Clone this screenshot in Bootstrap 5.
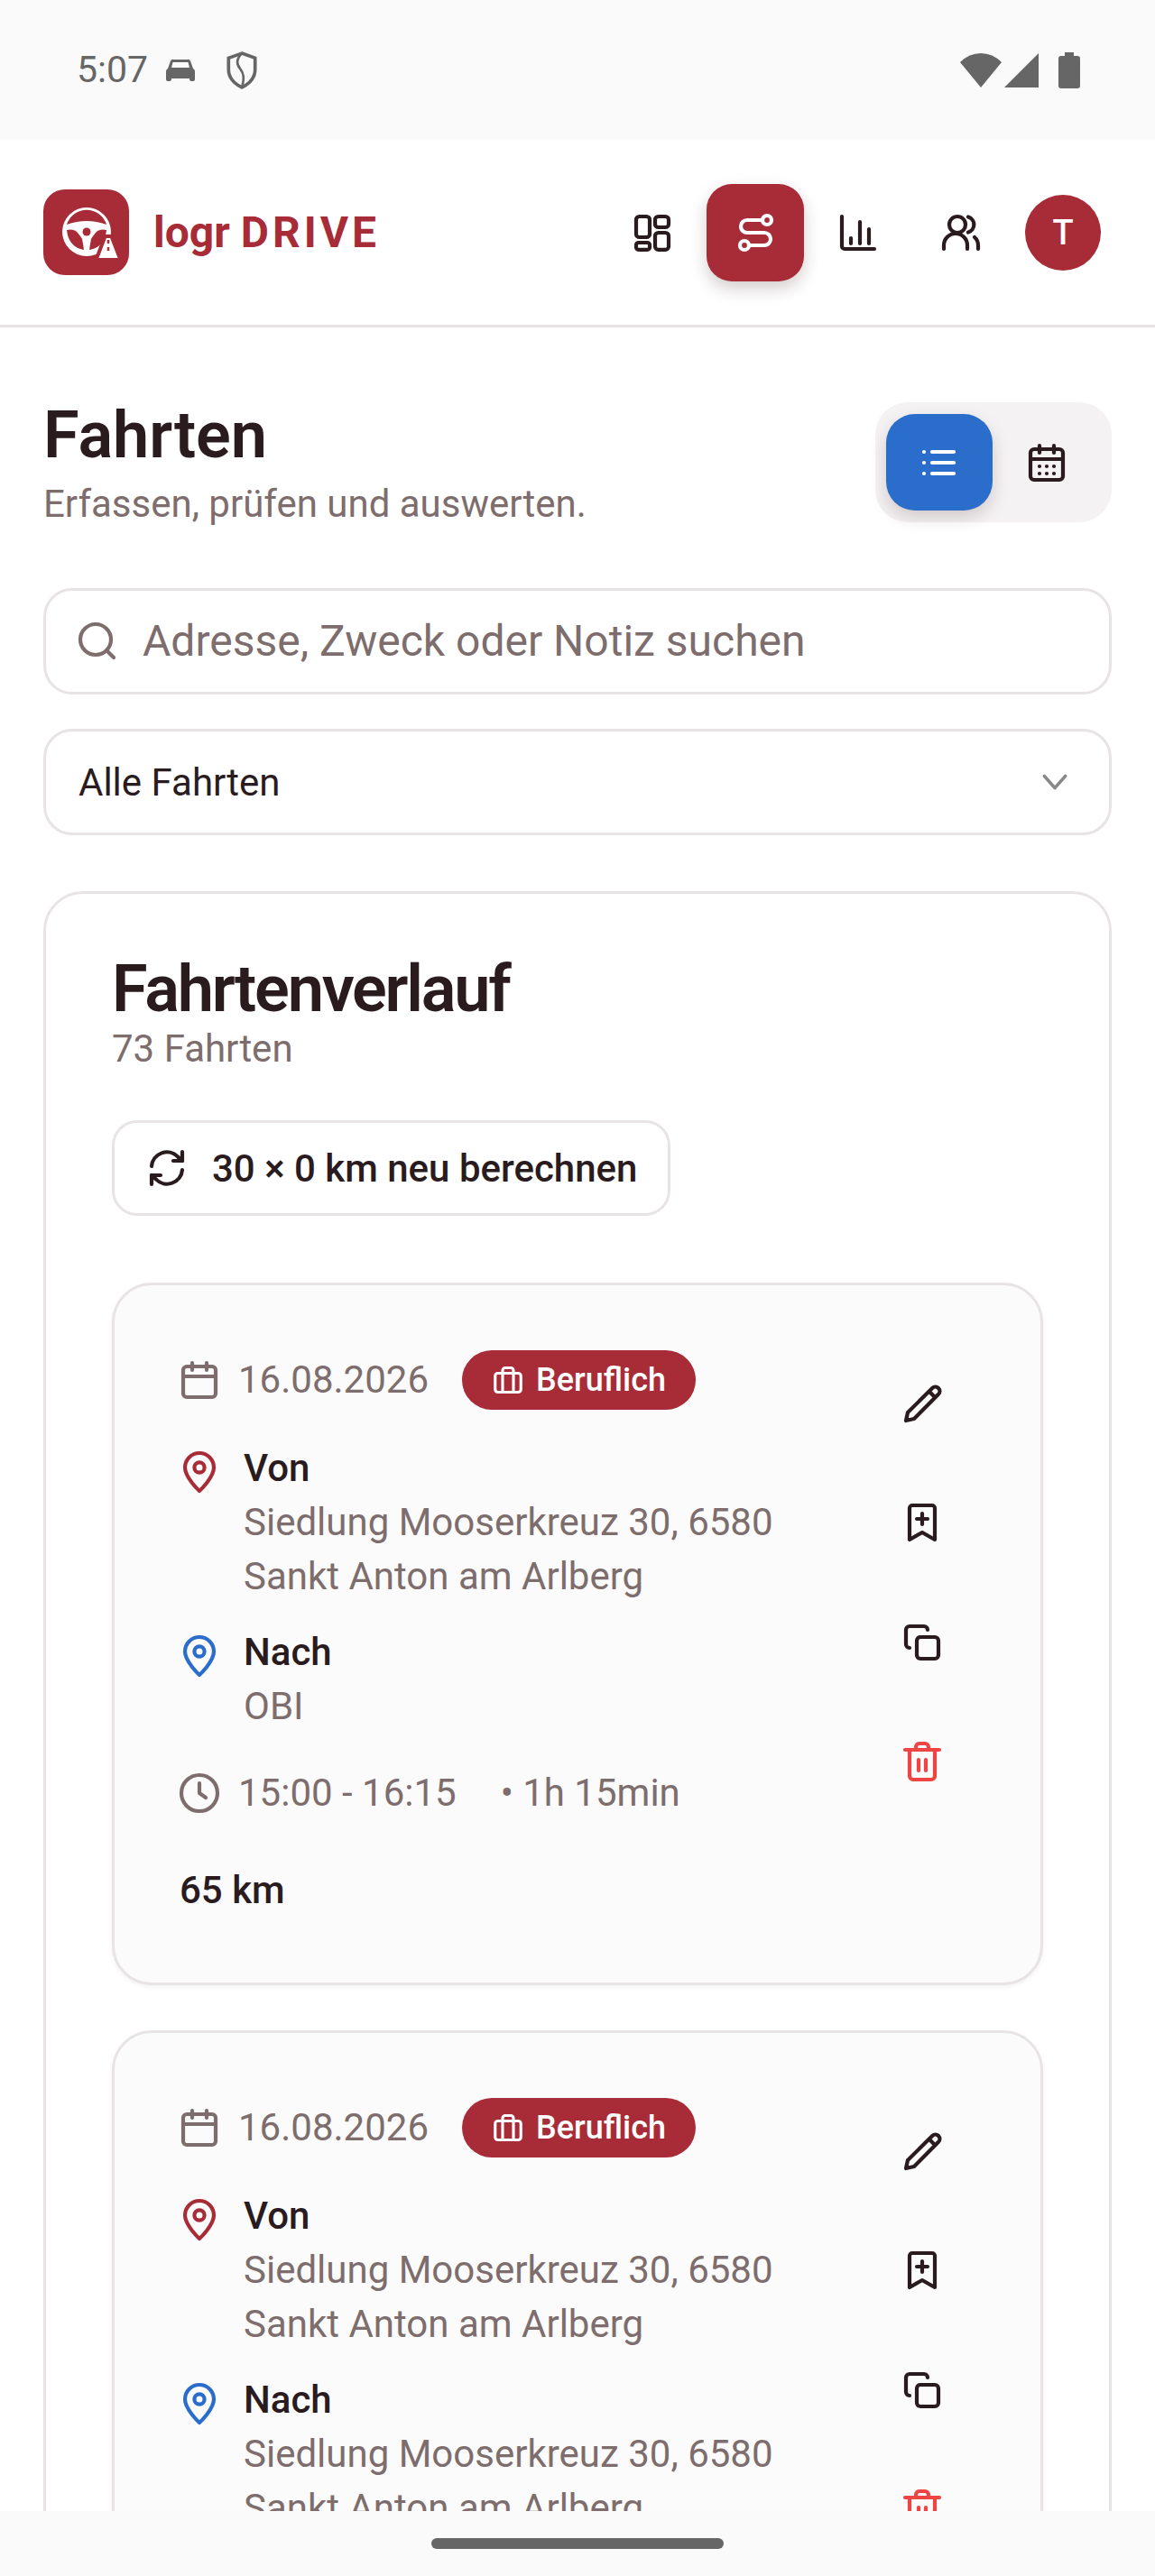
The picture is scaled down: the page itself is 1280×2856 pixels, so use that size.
<!DOCTYPE html>
<html lang="de">
<head>
  <meta charset="UTF-8">
  <title>logr DRIVE - Fahrten</title>
  <link href="https://cdn.jsdelivr.net/npm/bootstrap@5.3.3/dist/css/bootstrap.min.css" rel="stylesheet">
  <style>
    :root {
      --brand: #a82c37;
      --ink: #2a1c1e;
      --muted: #7d6d6d;
      --line: #e8e4e6;
      --blue: #2b6dcb;
    }
    html, body { height: 2856px; }
    body {
      margin: 0;
      overflow: hidden;
      background: #fff;
      color: var(--ink);
      font-family: Roboto, "Liberation Sans", sans-serif;
      font-size: 42px;
      line-height: 60px;
    }
    svg.ico {
      width: 48px;
      height: 48px;
      margin: -2px;
      flex: none;
      fill: none;
      stroke: currentColor;
      stroke-width: 2.1;
      stroke-linecap: round;
      stroke-linejoin: round;
    }

    .status-bar { height: 155px; background: #fafafa; color: #666; padding: 0 83px 0 85px; }
    .status-time { font-size: 41px; line-height: 44px; margin-right: 20px; margin-top: -2px; }
    .shield-mark { margin-left: 34px; }
    .signal-mark { margin-left: 3px; }
    .battery-mark { margin-left: 22px; }
    .app-screen { height: 2629px; overflow: hidden; }
    .bottom-bar { height: 72px; background: #fafafa; }
    .home-pill { width: 324px; height: 12px; border-radius: 6px; background: #666; }

    .top-bar { height: 208px; border-bottom: 3px solid var(--line); padding: 0 60px 0 48px; }
    .logo-tile { width: 95px; height: 95px; border-radius: 24px; background: var(--brand); }
    .logo-text { font-weight: 700; font-size: 48px; line-height: 1; color: var(--brand); margin-left: 27px; }
    .logo-text span { letter-spacing: 4px; }
    .nav-icons { gap: 6px; }
    .nav-btn { width: 108px; height: 108px; border-radius: 28px; color: var(--ink); border: 0; padding: 0; }
    .nav-btn.is-on { background: var(--brand); color: #fff; box-shadow: 0 8px 18px rgba(60, 30, 30, .22); }
    .nav-btn.is-on:hover { background: var(--brand); color: #fff; }
    .avatar-dot { width: 84px; height: 84px; border-radius: 50%; background: var(--brand); color: #fff; font-weight: 500; font-size: 38px; margin-left: 11px; }

    .page-body { padding: 83px 48px 0; }
    .page-title { font-size: 72px; line-height: 74px; font-weight: 600; margin: 0; }
    .page-sub { font-size: 42px; line-height: 60px; color: var(--muted); margin: 9px 0 0; }
    .view-toggle { padding: 13px 13px 13px 12px; border-radius: 36px; background: #f4f2f3; height: 133px; }
    .view-btn { width: 119px; height: 107px; border-radius: 32px; border: 0; padding: 0; color: var(--ink); }
    .view-btn.is-on { width: 118px; background: var(--blue); color: #fff; box-shadow: 0 8px 18px rgba(60, 30, 30, .18); }
    .view-btn.is-on:hover { background: var(--blue); color: #fff; }

    .search-box { height: 118px; margin-top: 63px; border: 3px solid var(--line); border-radius: 32px; padding-left: 35px; color: var(--muted); background: #fff; }
    .search-box input { border: 0; padding: 0 0 0 28px; font-size: 48px; color: var(--ink); background: transparent; box-shadow: none; }
    .search-box input::placeholder { color: var(--muted); opacity: 1; }
    .filter-select {
      height: 118px;
      margin-top: 38px;
      border: 3px solid var(--line);
      border-radius: 32px;
      padding: 0 100px 0 36px;
      font-size: 42px;
      color: var(--ink);
      background-position: right 40px center;
      background-size: 40px 40px;
      background-image: url("data:image/svg+xml,%3csvg xmlns='http://www.w3.org/2000/svg' viewBox='0 0 24 24'%3e%3cpath fill='none' stroke='%23888' stroke-width='2.2' stroke-linecap='round' stroke-linejoin='round' d='M5 8l7 8 7-8'/%3e%3c/svg%3e");
    }

    .history-card { margin-top: 62px; border: 3px solid var(--line); border-radius: 44px; padding: 68px 73px 0; }
    .history-title { font-size: 72px; line-height: 76px; font-weight: 600; letter-spacing: -2.2px; margin: 0; }
    .history-count { color: var(--muted); font-size: 42px; line-height: 50px; margin: 3px 0 0; }
    .recalc-btn { width: fit-content; height: 106px; margin-top: 54px; border: 3px solid var(--line); border-radius: 28px; padding: 0 34px 0 36px; font-size: 42px; font-weight: 500; color: var(--ink); background: #fff; gap: 28px; }

    .trip-card { margin-top: 74px; border: 3px solid var(--line); border-radius: 44px; background: #fbfbfc; padding: 72px 65px 72px 72px; box-shadow: 0 2px 5px rgba(60, 30, 30, .06); }
    .trip-card + .trip-card { margin-top: 50px; }
    .trip-main { min-width: 0; }
    .date-row { height: 66px; }
    .date-ico { color: var(--muted); }
    .date-txt, .gap-dot { color: var(--muted); }
    .date-txt { margin-left: 21px; }
    .kind-badge { height: 66px; margin-left: 37px; padding: 0 33px; gap: 13px; border-radius: 33px; background: var(--brand); color: #fff; font-size: 36px; font-weight: 500; }
    .kind-badge svg.ico { width: 36px; height: 36px; margin: 0; }
    .place-row { gap: 27px; }
    .place-row.from { margin-top: 35px; }
    .place-row.to { margin-top: 24px; }
    .place-label { font-weight: 500; }
    .place-addr { color: var(--muted); }
    .pin-from { color: var(--brand); margin-top: 10px !important; }
    .pin-to { color: var(--blue); margin-top: 10px !important; }
    .time-row { margin-top: 36px; }
    .gap-dot { margin-left: 49px; }
    .km-row { margin-top: 48px; font-weight: 500; }
    .trip-actions { width: 132px; gap: 12px; }
    .act-btn { width: 132px; height: 120px; padding: 0; border: 0; color: var(--ink); }
    .act-btn.is-danger { color: #ef4444; }
  </style>
</head>
<body>
  <svg width="0" height="0" class="d-block position-absolute">
    <defs>
      <symbol id="i-grid" viewBox="0 0 24 24"><rect x="3" y="3" width="7.500" height="11.500" rx="1.800"/><rect x="13.500" y="3" width="7.500" height="6" rx="1.800"/><rect x="3" y="17.500" width="7.500" height="3.900" rx="1.300"/><rect x="13.500" y="12" width="7.500" height="9.400" rx="1.800"/></symbol>
      <symbol id="i-route" viewBox="0 0 24 24"><circle cx="18.500" cy="5" r="2.500"/><circle cx="6" cy="19" r="2.500"/><path d="M16 5H7.500a3.500 3.500 0 0 0 0 7h9.500a3.500 3.500 0 0 1 0 7H8.500"/></symbol>
      <symbol id="i-chart" viewBox="0 0 24 24"><path d="M3 3v16.500a1.500 1.500 0 0 0 1.500 1.500H21"/><path d="M8 15v3M13 6v12M18 10v8"/></symbol>
      <symbol id="i-users" viewBox="0 0 24 24"><circle cx="10" cy="7.500" r="4.500"/><path d="M2.500 21v-2a6.500 6.500 0 0 1 13 0v2"/><path d="M16 3.200a4.500 4.500 0 0 1 0 8.600"/><path d="M19.500 14.500a6 6 0 0 1 2 4.500v2"/></symbol>
      <symbol id="i-list" viewBox="0 0 24 24"><path d="M8 6h12M8 12h12M8 18h12M3.500 6h.01M3.500 12h.01M3.500 18h.01"/></symbol>
      <symbol id="i-month" viewBox="0 0 24 24"><rect x="3" y="4.500" width="18" height="17" rx="2"/><path d="M3 10h18M8 2.500v4M16 2.500v4"/><path d="M8 14h.01M12 14h.01M16 14h.01M8 18h.01M12 18h.01M16 18h.01"/></symbol>
      <symbol id="i-search" viewBox="0 0 24 24"><circle cx="11" cy="11" r="8.500"/><path d="M17.500 17.500L21 21"/></symbol>
      <symbol id="i-sync" viewBox="0 0 24 24"><path d="M3.500 11a8.500 8.500 0 0 1 14.600-5.200L20.500 8"/><path d="M20.500 3v5h-5"/><path d="M20.500 13a8.500 8.500 0 0 1-14.600 5.200L3.500 16"/><path d="M3.500 21v-5h5"/></symbol>
      <symbol id="i-date" viewBox="0 0 24 24"><rect x="3" y="4.500" width="18" height="17" rx="2"/><path d="M3 10h18M8 2.500v4M16 2.500v4"/></symbol>
      <symbol id="i-case" viewBox="0 0 24 24"><rect x="2.500" y="7" width="19" height="14" rx="2"/><path d="M8 21V5a2 2 0 0 1 2-2h4a2 2 0 0 1 2 2v16"/></symbol>
      <symbol id="i-pin" viewBox="0 0 24 24"><path d="M12 22.500s-8-7.400-8-13a8 8 0 0 1 16 0c0 5.600-8 13-8 13z"/><circle cx="12" cy="9.500" r="2.800"/></symbol>
      <symbol id="i-clock" viewBox="0 0 24 24"><circle cx="12" cy="12" r="10"/><path d="M12 6.500V12l3.500 2.500"/></symbol>
      <symbol id="i-pencil" viewBox="0 0 24 24"><path d="M3 21l1-4.500L17.600 3a2.400 2.400 0 0 1 3.400 3.400L7.500 20z"/><path d="M16 5l3 3"/></symbol>
      <symbol id="i-mark" viewBox="0 0 24 24"><path d="M5 3.500A1.500 1.500 0 0 1 6.500 2h11A1.500 1.500 0 0 1 19 3.500V21l-7-4-7 4z"/><path d="M12 6.500v6M9 9.500h6"/></symbol>
      <symbol id="i-copy" viewBox="0 0 24 24"><rect x="9" y="9" width="12" height="12" rx="2"/><path d="M5 15a2 2 0 0 1-2-2V5a2 2 0 0 1 2-2h8a2 2 0 0 1 2 2"/></symbol>
      <symbol id="i-trash" viewBox="0 0 24 24"><path d="M2.500 5.500h19M5 5.500V20a2 2 0 0 0 2 2h10a2 2 0 0 0 2-2V5.500M8.500 5.500V4a2 2 0 0 1 2-2h3a2 2 0 0 1 2 2v1.500M10 11v6M14 11v6"/></symbol>
    </defs>
  </svg>

  <div class="status-bar d-flex align-items-center">
    <span class="status-time">5:07</span>
    <svg width="32" height="26" viewBox="0 0 32 26" fill="#666"><path d="M5 2.500Q5.500 1 7 1h18q1.500 0 2 1.500L30 11q2 1 2 3v9q0 2-2 2h-2q-2 0-2-2v-1H6v1q0 2-2 2H2q-2 0-2-2v-9q0-2 2-3zM7.500 4L6 10h20l-1.500-6z" fill-rule="evenodd"/></svg>
    <svg class="shield-mark" width="36" height="42" viewBox="0 0 34 40" fill="none" stroke="#666" stroke-width="3.500"><path d="M17 2l14 5v12c0 9-6 15-14 19C9 34 3 28 3 19V7z"/><path d="M17 2c-6 6-6 11-2 16s5 10 2 20" stroke-width="2.500"/></svg>
    <div class="ms-auto d-flex align-items-center">
      <svg width="46" height="38" viewBox="0 0 46 38" fill="#666"><path d="M23 38L0 10Q10 0 23 0t23 10z"/></svg>
      <svg class="signal-mark" width="38" height="38" viewBox="0 0 38 38" fill="#666"><path d="M38 0v38H0z"/></svg>
      <svg class="battery-mark" width="24" height="40" viewBox="0 0 24 40" fill="#666"><path d="M7 0h10v4h4q3 0 3 3v30q0 3-3 3H3q-3 0-3-3V7q0-3 3-3h4z"/></svg>
    </div>
  </div>

  <div class="app-screen">
    <nav class="top-bar d-flex align-items-center">
      <div class="logo-tile d-flex align-items-center justify-content-center">
        <svg width="95" height="95" viewBox="0 0 95 95">
          <circle cx="48" cy="47" r="27" fill="#fff"/>
          <path d="M26 39a23 23 0 0 1 44 0q-11-4-22-4t-22 4z" fill="#a82c37"/>
          <path d="M26 45q8-2 12 3t5 7q1 5 2 12q-17-3-19-22z" fill="#a82c37"/>
          <path d="M70 45q-8-2-12 3t-5 7q-1 5-2 12q17-3 19-22z" fill="#a82c37"/>
          <circle cx="48" cy="47" r="4.500" fill="#a82c37"/>
          <path d="M68.500 52h7l10 26h-27z" fill="#fff" stroke="#a82c37" stroke-width="4"/>
          <path d="M72 56v4M72 64v4" stroke="#a82c37" stroke-width="2.500"/>
        </svg>
      </div>
      <div class="logo-text">logr <span>DRIVE</span></div>
      <div class="ms-auto d-flex align-items-center nav-icons">
        <button class="btn nav-btn" type="button"><svg class="ico"><use href="#i-grid"/></svg></button>
        <button class="btn nav-btn is-on" type="button"><svg class="ico"><use href="#i-route"/></svg></button>
        <button class="btn nav-btn" type="button"><svg class="ico"><use href="#i-chart"/></svg></button>
        <button class="btn nav-btn" type="button"><svg class="ico"><use href="#i-users"/></svg></button>
        <div class="avatar-dot d-flex align-items-center justify-content-center">T</div>
      </div>
    </nav>

    <main class="page-body">
      <div class="d-flex justify-content-between align-items-start">
        <div>
          <h1 class="page-title">Fahrten</h1>
          <p class="page-sub">Erfassen, prüfen und auswerten.</p>
        </div>
        <div class="view-toggle d-flex align-items-center">
          <button class="btn view-btn is-on" type="button"><svg class="ico"><use href="#i-list"/></svg></button>
          <button class="btn view-btn" type="button"><svg class="ico"><use href="#i-month"/></svg></button>
        </div>
      </div>

      <div class="search-box d-flex align-items-center">
        <svg class="ico"><use href="#i-search"/></svg>
        <input class="form-control" type="text" placeholder="Adresse, Zweck oder Notiz suchen">
      </div>
      <select class="form-select filter-select">
        <option>Alle Fahrten</option>
      </select>

      <section class="history-card">
        <h2 class="history-title">Fahrtenverlauf</h2>
        <p class="history-count">73 Fahrten</p>
        <button class="btn recalc-btn d-flex align-items-center" type="button">
          <svg class="ico"><use href="#i-sync"/></svg>
          30 × 0 km neu berechnen
        </button>

        <article class="trip-card d-flex justify-content-between">
          <div class="trip-main">
            <div class="date-row d-flex align-items-center">
              <svg class="ico date-ico"><use href="#i-date"/></svg>
              <span class="date-txt">16.08.2026</span>
              <span class="kind-badge d-inline-flex align-items-center"><svg class="ico"><use href="#i-case"/></svg>Beruflich</span>
            </div>
            <div class="place-row from d-flex">
              <svg class="ico pin-from"><use href="#i-pin"/></svg>
              <div>
                <div class="place-label">Von</div>
                <div class="place-addr">Siedlung Mooserkreuz 30, 6580 Sankt Anton am Arlberg</div>
              </div>
            </div>
            <div class="place-row to d-flex">
              <svg class="ico pin-to"><use href="#i-pin"/></svg>
              <div>
                <div class="place-label">Nach</div>
                <div class="place-addr">OBI</div>
              </div>
            </div>
            <div class="time-row d-flex align-items-center">
              <svg class="ico date-ico"><use href="#i-clock"/></svg>
              <span class="date-txt">15:00 - 16:15</span>
              <span class="gap-dot">• 1h 15min</span>
            </div>
            <div class="km-row">65 km</div>
          </div>
          <div class="trip-actions d-flex flex-column flex-shrink-0">
            <button class="btn act-btn" type="button"><svg class="ico"><use href="#i-pencil"/></svg></button>
            <button class="btn act-btn" type="button"><svg class="ico"><use href="#i-mark"/></svg></button>
            <button class="btn act-btn" type="button"><svg class="ico"><use href="#i-copy"/></svg></button>
            <button class="btn act-btn is-danger" type="button"><svg class="ico"><use href="#i-trash"/></svg></button>
          </div>
        </article>

        <article class="trip-card d-flex justify-content-between">
          <div class="trip-main">
            <div class="date-row d-flex align-items-center">
              <svg class="ico date-ico"><use href="#i-date"/></svg>
              <span class="date-txt">16.08.2026</span>
              <span class="kind-badge d-inline-flex align-items-center"><svg class="ico"><use href="#i-case"/></svg>Beruflich</span>
            </div>
            <div class="place-row from d-flex">
              <svg class="ico pin-from"><use href="#i-pin"/></svg>
              <div>
                <div class="place-label">Von</div>
                <div class="place-addr">Siedlung Mooserkreuz 30, 6580 Sankt Anton am Arlberg</div>
              </div>
            </div>
            <div class="place-row to d-flex">
              <svg class="ico pin-to"><use href="#i-pin"/></svg>
              <div>
                <div class="place-label">Nach</div>
                <div class="place-addr">Siedlung Mooserkreuz 30, 6580 Sankt Anton am Arlberg</div>
              </div>
            </div>
          </div>
          <div class="trip-actions d-flex flex-column flex-shrink-0">
            <button class="btn act-btn" type="button"><svg class="ico"><use href="#i-pencil"/></svg></button>
            <button class="btn act-btn" type="button"><svg class="ico"><use href="#i-mark"/></svg></button>
            <button class="btn act-btn" type="button"><svg class="ico"><use href="#i-copy"/></svg></button>
            <button class="btn act-btn is-danger" type="button"><svg class="ico"><use href="#i-trash"/></svg></button>
          </div>
        </article>
      </section>
    </main>
  </div>

  <div class="bottom-bar d-flex justify-content-center align-items-center">
    <div class="home-pill"></div>
  </div>

  <script src="https://cdn.jsdelivr.net/npm/bootstrap@5.3.3/dist/js/bootstrap.bundle.min.js"></script>
</body>
</html>
